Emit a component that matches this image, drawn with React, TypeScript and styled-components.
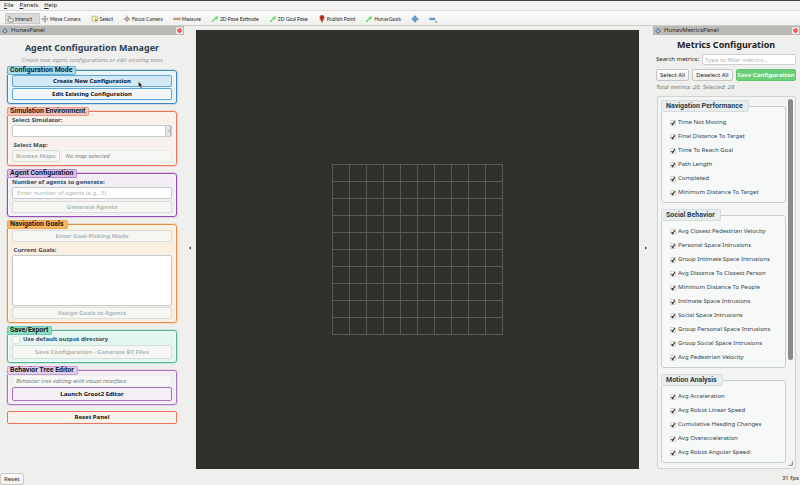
import React from "react";
import styled, { createGlobalStyle, css } from "styled-components";

const GlobalStyle = createGlobalStyle`
  * { box-sizing: border-box; }
  body { margin: 0; background: #efefee; color: #262626; font: 6px/9px "Noto Sans", sans-serif; }
  button, input, textarea, select { font: inherit; color: inherit; margin: 0; }
  h1, p, ul { margin: 0; padding: 0; }
  ul { list-style: none; }
`;

const Window = styled.div`
  display: flex;
  flex-direction: column;
  min-height: 100vh;
  border-top: 1px solid #454040;
`;

const MenuBar = styled.nav`
  display: flex;
  gap: 6px;
  height: 9px;
  padding-left: 4px;
  background: #f3f2f1;
`;

const MenuButton = styled.button`
  padding: 0;
  border: 0;
  background: none;
  line-height: 9px;
  &::first-letter { text-decoration: underline; }
`;

const Toolbar = styled.div`
  display: flex;
  height: 16px;
  padding: 2px 5px 1px;
  border-top: 1px solid #dcdbd9;
  border-bottom: 1px solid #cfcecc;
  background: linear-gradient(#fafaf9, #f0f0ef);
`;

const Tool = styled.button<{ $active?: boolean }>`
  display: flex;
  align-items: center;
  gap: 1px;
  padding: 0 ${(p) => (p.$active ? 8 : 9)}px 0 ${(p) => (p.$active ? 2 : 1)}px;
  border: 0;
  border-radius: 1px;
  background: ${(p) => (p.$active ? "#dbdad8" : "none")};
  box-shadow: ${(p) => (p.$active ? "inset 0 0 0 1px #cac9c7" : "none")};
  font: 5px/10px Lato, sans-serif;
  white-space: nowrap;
  color: #1c1c1c;
  svg { width: ${(p) => (p.$active ? 7 : 8)}px; height: 8px; flex: none; }
`;

const Main = styled.main`
  display: flex;
  flex: 1;
`;

const Dock = styled.section<{ $width: number }>`
  display: flex;
  flex-direction: column;
  flex: none;
  width: ${(p) => p.$width}px;
`;

const DockTitle = styled.header`
  display: flex;
  align-items: center;
  gap: 3px;
  height: 9px;
  padding: 0 1px 0 2px;
  background: #b9b9b6;
  color: #262626;
  > svg { width: 6px; height: 6px; }
`;

const CloseButton = styled.button`
  display: flex;
  margin-left: auto;
  padding: 0;
  border: 1px solid #e6e4e2;
  border-radius: 1px;
  background: #f4f0ef;
  svg { width: 5px; height: 5px; }
`;

const Splitter = styled.div<{ $width: number }>`
  display: flex;
  align-items: center;
  justify-content: center;
  flex: none;
  width: ${(p) => p.$width}px;
  svg { width: 2px; height: 4px; }
`;

const Viewport = styled.section`
  display: flex;
  flex: 1;
  align-items: center;
  justify-content: center;
  margin-top: 4px;
  background: #30302c;
  box-shadow: inset 1px 0 #262622;
`;

const PanelBody = styled.div`
  display: flex;
  flex-direction: column;
  gap: 3px;
  padding: 7px 7px 0;
`;

const Heading = styled.div`
  text-align: center;
  margin-bottom: -1px;
`;

const Title = styled.h1<{ $color: string }>`
  font-size: 9px;
  line-height: 12px;
  text-align: center;
  color: ${(p) => p.$color};
`;

const Subtitle = styled.p`
  padding-top: 2px;
  line-height: 8px;
  font-style: italic;
  color: #959a9a;
`;

type Tone = { line: string; fill: string; tag: string };

const Group = styled.fieldset<{ $tone: Tone }>`
  min-width: 0;
  margin: 0;
  padding: 0 4px 3px;
  border: 1px solid ${(p) => p.$tone.line};
  border-radius: 3px;
  background: ${(p) => p.$tone.fill};
  box-shadow: 0 0 0 1px ${(p) => p.$tone.line}33, inset 0 0 0 1px #ffffff66;
  legend {
    margin-left: -5px;
    padding: 0 3px 0 2px;
    border: 1px solid ${(p) => p.$tone.line}88;
    border-radius: 2px;
    background: ${(p) => p.$tone.tag};
    font: 700 7px/7px Roboto, sans-serif;
    color: #15181c;
  }
`;

const Stack = styled.div<{ $gap?: number; $top?: number }>`
  display: flex;
  flex-direction: column;
  gap: ${(p) => p.$gap ?? 0}px;
  padding-top: ${(p) => p.$top ?? 0}px;
`;

const Label = styled.label`
  display: block;
  font-weight: 700;
  line-height: 9px;
  color: #34495e;
`;

const boxed = css`
  border: 1px solid #c3cccd;
  border-radius: 2px;
  background: #fff;
`;

const ActionButton = styled.button<{ $line?: string; $fill?: string; $height?: number }>`
  ${boxed}
  height: ${(p) => p.$height ?? 12}px;
  padding: 0 4px;
  border-color: ${(p) => p.$line ?? "#aaa"};
  background: ${(p) => p.$fill ?? "#fff"};
  font-weight: 700;
  line-height: 9px;
  color: #111;
  white-space: nowrap;
  &:disabled {
    border-color: #d8dcda;
    background: #f6f6f3;
    color: #b0b7b9;
  }
`;

const HoverRow = styled.div`
  position: relative;
  display: grid;
`;

const Pointer = styled.svg`
  position: absolute;
  left: 126px;
  top: 6px;
  width: 5px;
  height: 8px;
`;

const SelectFrame = styled.div`
  ${boxed}
  display: flex;
  height: 12px;
  select {
    flex: 1;
    appearance: none;
    border: 0;
    background: none;
    padding: 0 4px;
  }
`;

const Arrow = styled.span`
  display: flex;
  align-items: center;
  justify-content: center;
  width: 6px;
  border-right: 1px solid #b4b8b8;
  border-left: 1px solid #ccc;
  background: #e6e6e5;
  svg { width: 3px; height: 2px; }
`;

const MapRow = styled.div`
  display: flex;
  gap: 1px;
  button { padding: 0 3px; }
`;

const Note = styled.p<{ $inset?: number }>`
  flex: 1;
  height: 12px;
  padding-left: ${(p) => p.$inset ?? 4}px;
  border: 1px solid #e9ecea;
  border-radius: 2px;
  background: #f7f7f5;
  line-height: 10px;
  font-style: italic;
  color: #728082;
`;

const TextInput = styled.input`
  ${boxed}
  min-width: 0;
  height: 12px;
  padding: 0 4px;
  line-height: 10px;
  &::placeholder { color: #b0b6b6; opacity: 1; }
`;

const SearchInput = styled(TextInput)`
  flex: 1;
  height: 11px;
  padding: 0 2px;
  border-color: #cfcfcd;
  line-height: 9px;
`;

const GoalsBox = styled.textarea`
  ${boxed}
  display: block;
  height: 51px;
  resize: none;
`;

const OutputRow = styled.label`
  display: flex;
  align-items: center;
  gap: 3px;
  height: 9px;
  margin-bottom: 1px;
  font-weight: 700;
  color: #34495e;
  input {
    appearance: none;
    width: 8px;
    height: 8px;
    border: 1px solid #dde3e2;
    border-radius: 1px;
    background: #fafcfb;
  }
`;

const ResetPanel = styled(ActionButton)`
  margin-top: 3px;
`;

const MetricsBody = styled.div`
  display: flex;
  flex-direction: column;
  flex: 1;
  padding: 4px 4px 0 3px;
`;

const SearchRow = styled.label`
  display: flex;
  align-items: center;
  gap: 3px;
  margin-top: 3px;
  white-space: nowrap;
`;

const ButtonRow = styled.div`
  display: flex;
  gap: 3px;
  margin-top: 4px;
`;

const SmallButton = styled.button<{ $primary?: boolean }>`
  flex: ${(p) => (p.$primary ? "1 0 auto" : "none")};
  height: 12px;
  padding: 0 ${(p) => (p.$primary ? 0 : 3)}px;
  border: 1px solid ${(p) => (p.$primary ? "#5fc56c" : "#c6c5c3")};
  border-radius: 2px;
  background: ${(p) => (p.$primary ? "#6bcf78" : "linear-gradient(#fcfcfc, #eeeeed)")};
  font-weight: ${(p) => (p.$primary ? 700 : 400)};
  line-height: 9px;
  color: ${(p) => (p.$primary ? "#f4fff4" : "#262626")};
  white-space: nowrap;
`;

const Totals = styled.p`
  margin: 2px 0 4px;
  font-style: italic;
  color: #757575;
`;

const ScrollArea = styled.div`
  display: flex;
  flex: 1;
  margin-left: 1px;
  padding: 2px 1px 0 3px;
  border: 1px solid #d2d2d0;
  border-radius: 2px;
  background: #f3f4f3;
`;

const MetricGroups = styled.div`
  display: flex;
  flex-direction: column;
  flex: 1;
  gap: 6px;
  padding-top: 1px;
`;

const MetricGroup = styled.fieldset`
  min-width: 0;
  margin: 0;
  padding: 0 0 3px;
  border: 1px solid #c5cdd0;
  border-radius: 3px;
  background: #f7f9f8;
  legend {
    margin-left: -1px;
    padding: 0 5px 0 4px;
    border: 1px solid #d5dcde;
    border-radius: 2px;
    background: #e8edee;
    font: 700 7px/10px Roboto, sans-serif;
    color: #2c3e50;
  }
`;

const MetricList = styled.ul`
  display: flex;
  flex-direction: column;
  gap: 1px;
  padding: 4px 0 0 8px;
`;

const MetricLabel = styled.label`
  display: flex;
  align-items: center;
  gap: 2px;
  height: 13px;
  color: #2f3f4d;
  white-space: nowrap;
  span { position: relative; display: flex; }
  input {
    appearance: none;
    width: 6px;
    height: 6px;
    border: 1px solid #d0d0d0;
    border-radius: 1px;
    background: #fff;
  }
  svg { position: absolute; inset: 0; width: 6px; height: 6px; pointer-events: none; }
`;

const ScrollTrack = styled.div`
  display: flex;
  flex-direction: column;
  justify-content: space-between;
  align-items: center;
  width: 8px;
  padding-bottom: 2px;
  > svg { width: 5px; height: 5px; }
`;

const Thumb = styled.div`
  width: 5px;
  height: 71%;
  border-radius: 3px;
  background: #8b8b89;
`;

const StatusBar = styled.footer`
  display: flex;
  align-items: flex-end;
  justify-content: space-between;
  height: 16px;
  padding: 0 1px 0 0;
  p { padding-bottom: 2px; }
`;

const PlainButton = styled.button`
  height: 12px;
  padding: 0 3px;
  border: 1px solid #c9c8c6;
  border-radius: 2px;
  background: linear-gradient(#fcfcfc, #f0f0ef);
  line-height: 9px;
`;

const HandIcon = () => (
  <svg viewBox="0 0 14 16"><path d="M4 14 1 9l1-1 2 1V2h2v5l6 1 1 1-1 5z" fill="#efeeec" stroke="#777" strokeWidth="1.3" /></svg>
);
const CrossIcon = () => (
  <svg viewBox="0 0 14 16"><path d="m7 1 2.500 3H8v3h3V5.500l3 2.500-3 2.500V9H8v3h1.500L7 15l-2.500-3H6V9H3v1.500L0 8l3-2.500V7h3V4H4.500z" fill="#a5a5a3" stroke="#8d8d8b" strokeWidth=".5" /></svg>
);
const FocusIcon = () => (
  <svg viewBox="0 0 14 16"><path d="M7 1v14M0 8h14" stroke="#8d8d8b" strokeWidth="1.600" /><circle cx="7" cy="8" r="3.500" fill="#b4b4b2" stroke="#8d8d8b" strokeWidth="1.500" /></svg>
);
const SelectIcon = () => (
  <svg viewBox="0 0 14 16"><path d="M1 2.500h11v10H1z" fill="#f1efae" stroke="#75896b" strokeDasharray="2 1" strokeWidth="1.200" /><path d="m7 7 6 4-3 .500L8.500 14z" fill="#5aa04c" /></svg>
);
const RulerIcon = () => (
  <svg viewBox="0 0 14 16"><path d="M0 6h14v4H0z" fill="#d9b27c" stroke="#a8906c" strokeWidth=".8" /><path d="M3 6v2m3-2v2m3-2v2m3-2v2" stroke="#86705a" /></svg>
);
const PoseIcon = () => (
  <svg viewBox="0 0 14 16"><path d="M1 13.500 9 6" stroke="#57e05c" strokeWidth="2.600" /><path d="m13.500 2-2.500 8-5-5z" fill="#57e05c" /></svg>
);
const PinIcon = () => (
  <svg viewBox="0 0 14 16"><path d="M7 15.500C6 11 2.500 9 2.500 5a4.500 4.500 0 0 1 9 0c0 4-3.500 6-4.500 10.500z" fill="#c43c27" stroke="#7c3d31" strokeWidth=".7" /><circle cx="7" cy="5" r="1.600" fill="#5a1b12" /></svg>
);
const PlusIcon = () => (
  <svg viewBox="0 0 14 16"><path d="M5 2h4v4h4v4H9v4H5v-4H1V6h4z" fill="#6c9fcd" stroke="#4d80af" /></svg>
);
const MinusIcon = () => (
  <svg viewBox="0 0 16 16"><path d="M1 6h11v4H1z" fill="#6c9fcd" stroke="#4d80af" strokeWidth=".7" /><path d="M12 13h4l-2 3z" fill="#444" /></svg>
);
const PanelIcon = () => (
  <svg viewBox="0 0 12 12"><path d="m6 0 6 6-6 6-6-6z" fill="#5d7ea6" /><path d="m6 3 3 3-3 3-3-3z" fill="#b9cbe0" /></svg>
);
const CloseIcon = () => (
  <svg viewBox="0 0 10 10"><circle cx="5" cy="5" r="4.500" fill="#d9402f" /><path d="m3.500 3.500 3 3m0-3-3 3" stroke="#fff" strokeWidth="1.300" /></svg>
);
const CheckMark = () => (
  <svg viewBox="0 0 12 12"><path d="m3 6 2.300 3L9.500 2.500" fill="none" stroke="#1c1c1c" strokeWidth="2.200" /></svg>
);

const tools = [
  { label: "Interact", icon: <HandIcon />, active: true },
  { label: "Move Camera", icon: <CrossIcon /> },
  { label: "Select", icon: <SelectIcon /> },
  { label: "Focus Camera", icon: <FocusIcon /> },
  { label: "Measure", icon: <RulerIcon /> },
  { label: "2D Pose Estimate", icon: <PoseIcon /> },
  { label: "2D Goal Pose", icon: <PoseIcon /> },
  { label: "Publish Point", icon: <PinIcon /> },
  { label: "HunavGoals", icon: <PoseIcon /> },
];

const tones: Record<string, Tone> = {
  blue: { line: "#3f86bd", fill: "#e9f3f8", tag: "#a9dfe8" },
  red: { line: "#ea7460", fill: "#f8f1ec", tag: "#f5c3b8" },
  purple: { line: "#9350b2", fill: "#f2eef4", tag: "#dcc2e6" },
  orange: { line: "#e58c45", fill: "#faf0e1", tag: "#f9b964" },
  green: { line: "#4fb693", fill: "#e4f6f2", tag: "#8eddc2" },
  violet: { line: "#ab72c4", fill: "#f2eef4", tag: "#e2cdec" },
};

const metrics = [
  { title: "Navigation Performance", items: ["Time Not Moving", "Final Distance To Target", "Time To Reach Goal", "Path Length", "Completed", "Minimum Distance To Target"] },
  { title: "Social Behavior", items: ["Avg Closest Pedestrian Velocity", "Personal Space Intrusions", "Group Intimate Space Intrusions", "Avg Distance To Closest Person", "Minimum Distance To People", "Intimate Space Intrusions", "Social Space Intrusions", "Group Personal Space Intrusions", "Group Social Space Intrusions", "Avg Pedestrian Velocity"] },
  { title: "Motion Analysis", items: ["Avg Acceleration", "Avg Robot Linear Speed", "Cumulative Heading Changes", "Avg Overacceleration", "Avg Robot Angular Speed"] },
];

const gridPath = Array.from({ length: 11 }, (_, i) => `M0 ${i * 17 + 0.5}H171M${i * 17 + 0.5} 0V171`).join("");

const TitleBar = ({ name }: { name: string }) => (
  <DockTitle>
    <PanelIcon />
    {name}
    <CloseButton aria-label={`Close ${name}`}><CloseIcon /></CloseButton>
  </DockTitle>
);

const AgentPanel = () => (
  <Dock $width={184}>
    <TitleBar name="HunavPanel" />
    <PanelBody>
      <Heading>
        <Title $color="#2c3e50">Agent Configuration Manager</Title>
        <Subtitle>Create new agent configurations or edit existing ones</Subtitle>
      </Heading>
      <Group $tone={tones.blue}>
        <legend>Configuration Mode</legend>
        <Stack $gap={1}>
          <HoverRow>
            <ActionButton $line="#5ba7db" $fill="#d4e8f6">Create New Configuration</ActionButton>
            <Pointer viewBox="0 0 10 16"><path d="M1 1v11l3-2 2 5 2-1-2-5h3z" fill="#222" stroke="#ddd" strokeWidth=".7" /></Pointer>
          </HoverRow>
          <ActionButton $line="#5ba7db" $fill="#f1f6f9">Edit Existing Configuration</ActionButton>
        </Stack>
      </Group>
      <Group $tone={tones.red}>
        <legend>Simulation Environment</legend>
        <Stack>
          <Label htmlFor="simulator">Select Simulator:</Label>
          <SelectFrame>
            <select id="simulator"><option></option></select>
            <Arrow><svg viewBox="0 0 6 4"><path d="M0 0h6L3 4z" fill="#aaa" /></svg></Arrow>
          </SelectFrame>
          <Stack $top={4}>
            <Label htmlFor="browse">&nbsp;Select Map:</Label>
            <MapRow>
              <ActionButton id="browse" disabled>Browse Maps</ActionButton>
              <Note>No map selected</Note>
            </MapRow>
          </Stack>
        </Stack>
      </Group>
      <Group $tone={tones.purple}>
        <legend>Agent Configuration</legend>
        <Stack>
          <Label htmlFor="agents">Number of agents to generate:</Label>
          <Stack $gap={2}>
            <TextInput id="agents" placeholder="Enter number of agents (e.g., 5)" />
            <ActionButton disabled>Generate Agents</ActionButton>
          </Stack>
        </Stack>
      </Group>
      <Group $tone={tones.orange}>
        <legend>Navigation Goals</legend>
        <Stack $gap={4} $top={1}>
          <ActionButton disabled>Enter Goal-Picking Mode</ActionButton>
          <Stack>
            <Label htmlFor="goals">&nbsp;Current Goals:</Label>
            <Stack $gap={1}>
              <GoalsBox id="goals" readOnly />
              <ActionButton disabled>Assign Goals to Agents</ActionButton>
            </Stack>
          </Stack>
        </Stack>
      </Group>
      <Group $tone={tones.green}>
        <legend>Save/Export</legend>
        <Stack>
          <OutputRow><input type="checkbox" />Use default output directory</OutputRow>
          <ActionButton $height={14} disabled>Save Configuration - Generate BT Files</ActionButton>
        </Stack>
      </Group>
      <Group $tone={tones.violet}>
        <legend>Behavior Tree Editor</legend>
        <Stack>
          <Note as="div" $inset={3}>Behavior tree editing with visual interface</Note>
          <ActionButton $height={14} $line="#ab72c4" $fill="#f4f0f6">Launch Groot2 Editor</ActionButton>
        </Stack>
      </Group>
      <ResetPanel $height={13} $line="#ea7460" $fill="#f9f2ea">Reset Panel</ResetPanel>
    </PanelBody>
  </Dock>
);

const MetricsPanel = () => (
  <Dock $width={147}>
    <TitleBar name="HunavMetricsPanel" />
    <MetricsBody>
      <Title $color="#1c1c1c">Metrics Configuration</Title>
      <SearchRow>Search metrics:<SearchInput placeholder="Type to filter metrics..." /></SearchRow>
      <ButtonRow>
        <SmallButton>Select All</SmallButton>
        <SmallButton>Deselect All</SmallButton>
        <SmallButton $primary>Save Configuration</SmallButton>
      </ButtonRow>
      <Totals>Total metrics: 28, Selected: 28</Totals>
      <ScrollArea>
        <MetricGroups>
          {metrics.map((group) => (
            <MetricGroup key={group.title}>
              <legend>{group.title}</legend>
              <MetricList>
                {group.items.map((item) => (
                  <li key={item}>
                    <MetricLabel>
                      <span><input type="checkbox" defaultChecked /><CheckMark /></span>
                      {item}
                    </MetricLabel>
                  </li>
                ))}
              </MetricList>
            </MetricGroup>
          ))}
        </MetricGroups>
        <ScrollTrack>
          <Thumb />
          <svg viewBox="0 0 10 10"><path d="M9 0v9H0M9 4 4 9" fill="none" stroke="#888" strokeWidth="1.500" /></svg>
        </ScrollTrack>
      </ScrollArea>
    </MetricsBody>
  </Dock>
);

export default function App() {
  return (
    <Window>
      <GlobalStyle />
      <MenuBar>
        <MenuButton>File</MenuButton>
        <MenuButton>Panels</MenuButton>
        <MenuButton>Help</MenuButton>
      </MenuBar>
      <Toolbar>
        {tools.map((tool) => (
          <Tool key={tool.label} $active={tool.active}>{tool.icon}{tool.label}</Tool>
        ))}
        <Tool aria-label="Add tool"><PlusIcon /></Tool>
        <Tool aria-label="Remove tool"><MinusIcon /></Tool>
      </Toolbar>
      <Main>
        <AgentPanel />
        <Splitter $width={12}><svg viewBox="0 0 4 8"><path d="M4 1v6L0 4z" fill="#333" /></svg></Splitter>
        <Viewport>
          <svg width="171" height="171" viewBox="0 0 171 171"><path d={gridPath} stroke="#595955" fill="none" /></svg>
        </Viewport>
        <Splitter $width={14}><svg viewBox="0 0 4 8"><path d="M0 1v6l4-3z" fill="#333" /></svg></Splitter>
        <MetricsPanel />
      </Main>
      <StatusBar>
        <PlainButton>Reset</PlainButton>
        <p>31 fps</p>
      </StatusBar>
    </Window>
  );
}
